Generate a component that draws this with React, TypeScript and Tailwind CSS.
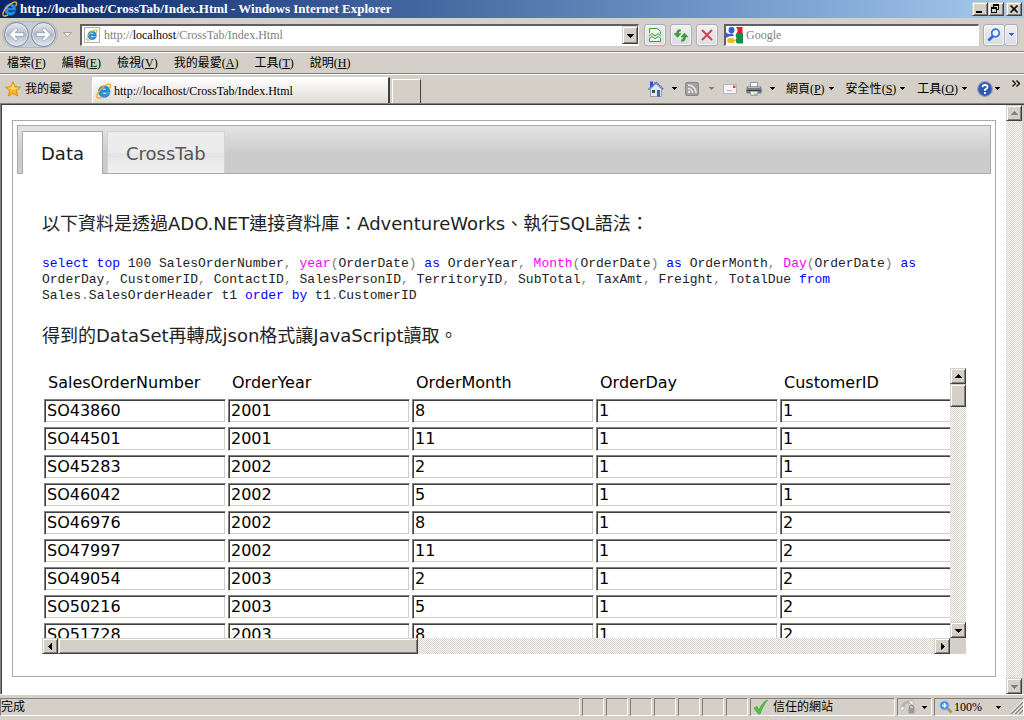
import React from "react";

const ui = "font-['Liberation_Serif','Noto_Sans_CJK_TC',serif]";
const raised =
  "border border-t-[#d4d0c8] border-l-[#d4d0c8] border-r-[#404040] border-b-[#404040] bg-[#d4d0c8] shadow-[inset_1px_1px_0_#fff,inset_-1px_-1px_0_#808080]";
const track =
  "bg-[conic-gradient(#fff_25%,#d4d0c8_0_50%,#fff_0_75%,#d4d0c8_0)] bg-[length:2px_2px]";
const glass =
  "flex items-center justify-center rounded-[3px] border border-[#a9afbd] bg-linear-to-b from-[#f3f2f1] via-[#e4e4e8] to-[#dcdde4] shadow-[inset_0_0_0_1px_#f4f4f6]";
const pane = "flex h-[18px] items-center border border-t-[#808080] border-l-[#808080] border-r-white border-b-white";

function Arrow({ dir, color = "#000", small = false }: { dir: "up" | "down" | "left" | "right"; color?: string; small?: boolean }) {
  const paths = {
    up: "M4 2h1v1h1v1h1v1h1v1H1V5h1V4h1V3h1z",
    down: "M1 3h7v1H7v1H6v1H5v1H4V6H3V5H2V4H1z",
    left: "M6 1v7H5V7H4V6H3V5H2V4h1V3h1V2h1V1z",
    right: "M3 1v7h1V7h1V6h1V5h1V4H6V3H5V2H4V1z",
  };
  const path = small ? "M2 3h5v1H6v1H5v1H4V5H3V4H2z" : paths[dir];
  return (
    <svg viewBox="0 0 9 9" className="size-[9px] shrink-0" shapeRendering="crispEdges" aria-hidden="true">
      <path d={path} fill={color} />
    </svg>
  );
}

function IeLogo({ className = "size-4" }: { className?: string }) {
  return (
    <svg viewBox="0 0 16 16" className={`${className} shrink-0`} aria-hidden="true">
      <path d="M14 9.300H6c.2 1.300 1.100 2 2.400 2 .9 0 1.500-.3 2-.9h3.400c-.9 2.500-2.900 3.900-5.500 3.900-3.400 0-5.900-2.400-5.900-5.800 0-3.300 2.500-5.700 5.900-5.700 3.600 0 5.800 2.500 5.700 6.500zM6 7.100h4.300C10.100 5.900 9.400 5.300 8.200 5.300S6.200 5.900 6 7.100z" fill="#2493e3" stroke="#0f62b4" strokeWidth=".5" />
      <path d="M13.500 5.300C15.300 2.300 14.800.4 12 1.200 7.500 2.500.8 9.600.9 13.300c.1 2.600 3.200 1.600 5.100.5" fill="none" stroke="#f2ae1c" strokeWidth="1.400" />
    </svg>
  );
}

function PageIcon() {
  return (
    <span className="grid size-4 shrink-0 place-items-center border border-[#b0b0b0] bg-white">
      <IeLogo className="size-3" />
    </span>
  );
}

function RoundNav({ flip = false }: { flip?: boolean }) {
  return (
    <button type="button" aria-label={flip ? "下一頁" : "上一頁"} className="size-[25px] rounded-full border border-[#7f8a9c] bg-linear-to-b from-[#e6e8ec] via-[#b4bbc8] to-[#dcebf8] shadow-[inset_0_0_0_1px_#dfe4ed]">
      <svg viewBox="0 0 22 22" className={flip ? "size-full rotate-180" : "size-full"} aria-hidden="true">
        <path d="M4 11l6.500-6.500 2 2L9.500 9.300h8.500v3.400H9.500l3 2.800-2 2z" fill="#fff" stroke="#8a96aa" strokeWidth=".7" />
      </svg>
    </button>
  );
}

function Star() {
  return (
    <svg viewBox="0 0 16 16" className="size-4" aria-hidden="true">
      <path d="M8 .8l2.100 4.900 5.300.5-4 3.500 1.200 5.300L8 12.200 3.400 15l1.200-5.300-4-3.500 5.300-.5z" fill="#ffb91e" stroke="#d98a1a" />
      <path d="M8 2.500l1.300 4 4 .5-3 1.500-4.500-.2-3-1.500 3.500-.3z" fill="#ffdb66" />
    </svg>
  );
}

function House() {
  return (
    <svg viewBox="0 0 16 16" className="size-4" aria-hidden="true">
      <path d="M2.500 8L8 2.800 13.500 8v7.500h-11z" fill="#e4eaf4" stroke="#8a9ab6" />
      <path d="M2 .5h3v4l-3 2z" fill="#2c50cf" />
      <path d="M.5 8.500L8 1.200l7.500 7.300" fill="none" stroke="#3c62d6" strokeWidth="1.600" strokeDasharray="1.500 .6" />
      <path d="M4 9h3v3H4z" fill="#3d4658" />
      <path d="M9 9h3v6.500H9z" fill="#2f67bb" />
    </svg>
  );
}

function Feed() {
  return (
    <svg viewBox="0 0 14 14" className="size-[14px]" aria-hidden="true">
      <rect x=".5" y=".5" width="13" height="13" rx="1.500" fill="#a2a2a2" stroke="#858585" />
      <g fill="none" stroke="#eee" strokeWidth="1.500">
        <path d="M3 3a8 8 0 0 1 8 8M3 6.500A4.500 4.500 0 0 1 7.500 11" />
      </g>
      <circle cx="4" cy="10" r="1.200" fill="#eee" />
    </svg>
  );
}

function Mail() {
  return (
    <svg viewBox="0 0 14 10" className="h-[10px] w-[14px]" aria-hidden="true">
      <path d="M.5.5h13v9H.5z" fill="#f4f4f4" stroke="#b4b2ba" />
      <path d="M10 1.500h2.500V4H10z" fill="#ea3b35" />
      <path d="M4 6.500h5" stroke="#b5b5c2" />
    </svg>
  );
}

function Printer() {
  return (
    <svg viewBox="0 0 16 16" className="size-4" aria-hidden="true">
      <path d="M4.500 1.500h7V6h-7z" fill="#fff" stroke="#8d93a0" />
      <path d="M1 5.500h14l1 5-1 2H1l-1-2z" fill="#777b82" />
      <path d="M2 6.500h12" stroke="#b5b9c0" />
      <path d="M1 9.500h14" stroke="#3e4147" />
      <path d="M4.500 10.500h7v4h-7z" fill="#fff" stroke="#9da2ab" />
      <path d="M5.500 13h2" stroke="#e0c231" />
      <path d="M8 13h3" stroke="#2a8ee0" />
    </svg>
  );
}

function GoogleMark() {
  return (
    <svg viewBox="0 0 17 17" className="size-[17px] shrink-0" aria-hidden="true">
      <path d="M0 0h17v17H0z" fill="#fff" />
      <path d="M10 0h6.500v6H11q1.500-3-1-6z" fill="#e51c23" />
      <path d="M10.500 6H17v10.500h-6q-1.500-2-1.500-3.500l1-2-1-2z" fill="#0f9246" />
      <path d="M0 5.500Q3 8 6 6l2 3Q3 8.500 0 11z" fill="#2f63c7" />
      <ellipse cx="5.500" cy="3" rx="3" ry="3.200" fill="#2f63c7" />
      <ellipse cx="5" cy="13.500" rx="3.800" ry="2.600" fill="#f7b516" />
    </svg>
  );
}

function HelpIcon() {
  return (
    <svg viewBox="0 0 16 16" className="size-4" aria-hidden="true">
      <circle cx="8" cy="8" r="7.300" fill="#2c58b8" stroke="#8d9bb5" strokeWidth="1.200" />
      <path d="M5.500 6.200Q5.500 4 8 4t2.500 2.200Q10.500 7.500 8 8.500V10" fill="none" stroke="#fff" strokeWidth="1.800" />
      <path d="M7 11h2v2H7z" fill="#fff" />
    </svg>
  );
}

function Magnifier() {
  return (
    <svg viewBox="0 0 14 14" className="size-[14px]" aria-hidden="true">
      <path d="M1.500 12.500L6 8" stroke="#2468e0" strokeWidth="2.600" />
      <circle cx="8.500" cy="5" r="3.800" fill="#eef5ff" stroke="#2f73ea" strokeWidth="1.700" />
    </svg>
  );
}

function Key({ label, k }: { label: string; k: string }) {
  return (
    <span>
      {label}(<u className="underline-offset-1">{k}</u>)
    </span>
  );
}

const menus = [
  ["檔案", "F"],
  ["編輯", "E"],
  ["檢視", "V"],
  ["我的最愛", "A"],
  ["工具", "T"],
  ["說明", "H"],
];

const columns = ["SalesOrderNumber", "OrderYear", "OrderMonth", "OrderDay", "CustomerID"];
const orders = [
  ["SO43860", "2001", "8", "1", "1"],
  ["SO44501", "2001", "11", "1", "1"],
  ["SO45283", "2002", "2", "1", "1"],
  ["SO46042", "2002", "5", "1", "1"],
  ["SO46976", "2002", "8", "1", "2"],
  ["SO47997", "2002", "11", "1", "2"],
  ["SO49054", "2003", "2", "1", "2"],
  ["SO50216", "2003", "5", "1", "2"],
  ["SO51728", "2003", "8", "1", "2"],
];

function TitleBar() {
  return (
    <header className="flex h-[18px] shrink-0 items-center bg-linear-to-r from-[#0a246a] to-[#a6caf0] px-[2px]">
      <IeLogo />
      <h1 className="ml-[2px] flex-1 truncate text-[13px] leading-[18px] font-bold text-white">http://localhost/CrossTab/Index.Html - Windows Internet Explorer</h1>
      <button type="button" aria-label="最小化" className={`h-[14px] w-4 ${raised}`}>
        <svg viewBox="0 0 14 12" className="size-full"><path d="M3 8h6v2H3z" /></svg>
      </button>
      <button type="button" aria-label="還原" className={`h-[14px] w-4 ${raised}`}>
        <svg viewBox="0 0 14 12" className="size-full" shapeRendering="crispEdges"><path d="M4 1h6v6H8v3H2V4h2zM5 3v1h3v2h1V3zM3 6v3h4V6z" fillRule="evenodd" /></svg>
      </button>
      <button type="button" aria-label="關閉" className={`ml-[2px] h-[14px] w-4 ${raised}`}>
        <svg viewBox="0 0 14 12" className="size-full"><path d="M3.500 2.500l7 7m0-7l-7 7" stroke="#000" strokeWidth="1.600" /></svg>
      </button>
    </header>
  );
}

function AddressBar() {
  return (
    <div className="flex h-[33px] shrink-0 items-center pr-[6px] pl-[2px]">
      <div className="flex h-[27px] items-center gap-[2px] rounded-full border border-[#b4b8bf] bg-[#c6cad2] px-px">
        <RoundNav />
        <RoundNav flip />
      </div>
      <button type="button" aria-label="最近的網頁" className="mx-[5px] w-[9px]">
        <svg viewBox="0 0 9 6" className="h-[6px] w-[9px]"><path d="M.5.500h8l-4 4.500z" fill="#eee" stroke="#a6a39c" /></svg>
      </button>
      <div className="ml-[3px] flex h-[22px] flex-1 items-center border-t-2 border-r border-b border-l-2 border-t-[#606060] border-r-white border-b-white border-l-[#606060] bg-white pl-[2px]">
        <PageIcon />
        <div className="relative ml-1 h-[18px] flex-1 text-[12px] leading-[18px]">
          <input aria-label="網址" className="size-full bg-transparent outline-none" />
          <span className="pointer-events-none absolute inset-0 text-[#808080]">
            http://<span className="text-black">localhost</span>/CrossTab/Index.Html
          </span>
        </div>
        <button type="button" aria-label="網址清單" className={`grid h-[18px] w-4 place-items-center ${raised}`}>
          <Arrow dir="down" />
        </button>
      </div>
      <button type="button" aria-label="相容性檢視" className={`ml-[5px] size-[22px] ${glass}`}>
        <svg viewBox="0 0 14 16" className="h-4 w-[14px]">
          <path d="M1.500 6V1.500h8l3 3V7M1.500 11v3.500h11V11" fill="#f4fff2" stroke="#3e9c3b" />
          <path d="M1 9l3-2.500L7 9l3-2.500L13 9M1 12l3-2.500L7 12l3-2.500L13 12" fill="none" stroke="#3e9c3b" />
        </svg>
      </button>
      <button type="button" aria-label="重新整理" className={`ml-1 size-[22px] ${glass}`}>
        <svg viewBox="0 0 16 16" className="size-4">
          <path d="M7.500 2.500C4.500 2.500 3.500 4 3.500 6.500H1l3.500 4 3.500-4H5.700C5.700 5 6 4.300 7.500 4.200z" fill="#35a333" stroke="#278325" strokeWidth=".4" />
          <path d="M8.500 14.500c3 0 4-1.500 4-4.500H15l-3.500-4L8 10h2.300c0 1.800-.3 2.600-1.800 2.700z" fill="#35a333" stroke="#278325" strokeWidth=".4" />
        </svg>
      </button>
      <button type="button" aria-label="停止" className={`ml-1 size-[22px] ${glass}`}>
        <svg viewBox="0 0 12 12" className="size-3"><path d="M1 1l10 10m0-10L1 11" stroke="#ca4650" strokeWidth="2" /></svg>
      </button>
      <div className="ml-[6px] flex h-[22px] w-[255px] items-center border-t-2 border-r border-b border-l-2 border-t-[#606060] border-r-white border-b-white border-l-[#606060] bg-white">
        <GoogleMark />
        <input aria-label="搜尋" placeholder="Google" className="ml-[3px] w-full bg-transparent text-[12px] text-[#808080] outline-none placeholder:text-[#808080]" />
      </div>
      <div className="ml-1 flex">
        <button type="button" aria-label="搜尋" className={`h-[22px] w-[22px] ${glass}`}><Magnifier /></button>
        <button type="button" aria-label="搜尋選項" className={`-ml-px h-[22px] w-[14px] ${glass}`}><Arrow dir="down" small color="#2468c8" /></button>
      </div>
    </div>
  );
}

function MenuBar() {
  return (
    <nav className="flex h-[22px] shrink-0 items-center gap-4 border-t border-[#808080] px-[7px] text-[12px] shadow-[inset_0_1px_0_#fff]">
      {menus.map(([label, k]) => (
        <button key={k} type="button" className="whitespace-nowrap">
          <Key label={label} k={k} />
        </button>
      ))}
    </nav>
  );
}

function CommandBar() {
  return (
    <div className="flex h-[30px] shrink-0 items-center border-t border-t-[#808080] text-[12px] shadow-[inset_0_1px_0_#fff]">
      <button type="button" className="flex w-[92px] shrink-0 items-center gap-1 pl-[5px]">
        <Star />
        我的最愛
      </button>
      <button type="button" className="flex h-[26px] w-[298px] items-center gap-[2px] self-end border-t border-r-2 border-l border-white border-r-[#404040] bg-linear-to-b from-white to-[#dedbd5] pl-[3px]">
        <IeLogo />
        http://localhost/CrossTab/Index.Html
      </button>
      <button type="button" aria-label="新索引標籤" className="ml-[2px] h-6 w-[29px] self-end border-t border-r border-l border-white border-r-[#404040]" />
      <div className="ml-auto flex items-center whitespace-nowrap">
        <button type="button" aria-label="首頁" className="flex items-center gap-[6px]"><House /><Arrow dir="down" small /></button>
        <button type="button" aria-label="摘要" className="ml-[6px] flex items-center gap-2"><Feed /><Arrow dir="down" small color="#808080" /></button>
        <button type="button" aria-label="讀取郵件" className="ml-[7px]"><Mail /></button>
        <button type="button" aria-label="列印" className="ml-[9px] flex items-center gap-[6px]"><Printer /><Arrow dir="down" small /></button>
        <button type="button" className="ml-[9px] flex items-center gap-[2px]"><Key label="網頁" k="P" /><Arrow dir="down" small /></button>
        <button type="button" className="ml-[10px] flex items-center gap-[2px]"><Key label="安全性" k="S" /><Arrow dir="down" small /></button>
        <button type="button" className="ml-[10px] flex items-center gap-[2px]"><Key label="工具" k="O" /><Arrow dir="down" small /></button>
        <button type="button" aria-label="說明" className="ml-2 flex items-center"><HelpIcon /><Arrow dir="down" small /></button>
        <button type="button" aria-label="更多" className="mr-1 ml-[10px] self-start">
          <svg viewBox="0 0 8 7" className="h-[7px] w-2"><path d="M.5.500l3 3-3 3m4-6l3 3-3 3" fill="none" stroke="#000" strokeWidth="1.300" /></svg>
        </button>
      </div>
    </div>
  );
}

function Kw({ children }: { children: React.ReactNode }) {
  return <span className="text-[#0000ff]">{children}</span>;
}

function Fn({ children }: { children: React.ReactNode }) {
  return <span className="text-[#ff00ff]">{children}</span>;
}

function P({ children }: { children: React.ReactNode }) {
  return <span className="text-[#808080]">{children}</span>;
}

function Sql() {
  const fields = ["OrderDay", "CustomerID", "ContactID", "SalesPersonID", "TerritoryID", "SubTotal", "TaxAmt", "Freight"];
  return (
    <p className="font-['Liberation_Mono',monospace] text-[13px] leading-4 text-[#222]">
      <Kw>select top</Kw> 100 SalesOrderNumber<P>,</P> <Fn>year</Fn><P>(</P>OrderDate<P>)</P> <Kw>as</Kw> OrderYear<P>,</P>{" "}
      <Fn>Month</Fn><P>(</P>OrderDate<P>)</P> <Kw>as</Kw> OrderMonth<P>,</P> <Fn>Day</Fn><P>(</P>OrderDate<P>)</P> <Kw>as</Kw>{" "}
      {fields.map((f) => (
        <React.Fragment key={f}>
          {f}
          <P>,</P>{" "}
        </React.Fragment>
      ))}
      TotalDue <Kw>from</Kw>{" "}
      <span className="whitespace-nowrap">Sales<P>.</P>SalesOrderHeader</span> t1 <Kw>order by</Kw> t1<P>.</P>CustomerID
    </p>
  );
}

function OrdersGrid() {
  return (
    <div className="grid grid-cols-[1fr_16px] grid-rows-[270px_16px]">
      <div className="overflow-hidden">
        <table className="w-[920px] table-fixed border-collapse text-[16px] text-black">
          <thead>
            <tr className="h-[29px]">
              {columns.map((c) => (
                <th key={c} scope="col" className="w-[184px] p-0 pl-[6px] text-left leading-6 font-normal">{c}</th>
              ))}
            </tr>
          </thead>
          <tbody>
            {orders.map((row) => (
              <tr key={row[0]} className="h-7">
                {row.map((value, i) => (
                  <td key={columns[i]} className="p-0 pl-[2px]">
                    <input
                      aria-label={`${columns[i]} ${row[0]}`}
                      defaultValue={value}
                      className="block h-6 w-[182px] border border-t-[#808080] border-r-white border-b-white border-l-[#808080] px-[2px] shadow-[inset_1px_1px_0_#404040,inset_-1px_-1px_0_#d4d0c8] outline-none"
                    />
                  </td>
                ))}
              </tr>
            ))}
          </tbody>
        </table>
      </div>
      <div className={`flex flex-col ${track}`}>
        <button type="button" aria-label="向上捲動" className={`grid size-4 place-items-center ${raised}`}><Arrow dir="up" /></button>
        <div className={`h-[23px] ${raised}`} />
        <button type="button" aria-label="向下捲動" className={`mt-auto grid size-4 place-items-center ${raised}`}><Arrow dir="down" /></button>
      </div>
      <div className={`flex ${track}`}>
        <button type="button" aria-label="向左捲動" className={`grid size-4 place-items-center ${raised}`}><Arrow dir="left" /></button>
        <div className={`w-[360px] ${raised}`} />
        <button type="button" aria-label="向右捲動" className={`ml-auto grid size-4 place-items-center ${raised}`}><Arrow dir="right" /></button>
      </div>
      <div className="bg-[#d4d0c8]" />
    </div>
  );
}

function Page() {
  return (
    <main className="min-w-0 flex-1 overflow-hidden bg-white px-[10px] pt-[15px] font-['DejaVu_Sans','Noto_Sans_CJK_TC',sans-serif] text-[18px] leading-7 text-[#222]">
      <section className="border border-[#aaa] p-1">
        <div role="tablist" className="flex h-[49px] items-end gap-1 border border-[#aaa] bg-linear-to-b from-[#e2e2e2] from-5% via-[#cbcbcb] via-60% to-[#cccccc] pl-1">
          <button type="button" role="tab" aria-selected="true" className="-mb-px h-[43px] border border-b-0 border-[#aaa] bg-white px-[18px] pt-[2px] text-[#212121]">Data</button>
          <button type="button" role="tab" aria-selected="false" className="h-[42px] border border-b-0 border-[#d3d3d3] bg-linear-to-b from-[#ececec] from-50% via-[#e5e5e5] via-52% to-[#f0f0f0] px-[18px] pt-[2px] text-[#555]">CrossTab</button>
        </div>
        <div className="flex flex-col gap-[18px] pt-9 pr-[25px] pb-[18px] pl-[25px]">
          <p>以下資料是透過ADO.NET連接資料庫：AdventureWorks、執行SQL語法：</p>
          <Sql />
          <p>得到的DataSet再轉成json格式讓JavaScript讀取。</p>
          <OrdersGrid />
        </div>
      </section>
    </main>
  );
}

function StatusBar() {
  return (
    <footer className="flex h-[26px] shrink-0 items-start gap-[2px] border-t border-white pt-[3px] text-[12px] leading-4">
      <div className={`flex-1 ${pane}`}>完成</div>
      {["a", "b", "c", "d", "e", "f", "g"].map((id) => (
        <div key={id} className={`w-[22px] ${pane}`} />
      ))}
      <div className={`w-[145px] gap-1 pl-[2px] ${pane}`}>
        <svg viewBox="0 0 16 16" className="size-4" aria-hidden="true">
          <path d="M1 9l3-1.500L6 11C8 6 10.500 3 14.500 1 11.500 4.500 9 9 7 15H5.500z" fill="#4fc847" stroke="#279a27" strokeWidth=".6" />
        </svg>
        信任的網站
      </div>
      <button type="button" aria-label="受保護模式" className={`w-[35px] gap-1 pl-[2px] ${pane}`}>
        <svg viewBox="0 0 16 16" className="size-4" aria-hidden="true">
          <path d="M3 11a6 6 0 0 1 9-7" fill="none" stroke="#b5b5b5" strokeWidth="3" />
          <path d="M8 2h5v5z" fill="#f4f4f4" stroke="#a8a8a8" strokeWidth=".6" />
          <path d="M0 8h5l-2.500 4z" fill="#fff" stroke="#aaa" strokeWidth=".6" />
          <path d="M9.500 9V7.500q2-2.500 4 0V9" fill="none" stroke="#8a8a8a" strokeWidth="1.200" />
          <path d="M8.500 9h6v5.500h-6z" fill="#999" />
        </svg>
        <Arrow dir="down" small />
      </button>
      <button type="button" className={`w-[90px] pl-1 ${pane}`}>
        <svg viewBox="0 0 14 14" className="size-[14px]" aria-hidden="true">
          <path d="M8 8l4.500 4.500" stroke="#b98c54" strokeWidth="2.500" />
          <circle cx="5.500" cy="5.500" r="4.500" fill="#3b8fe8" stroke="#8dbbe8" />
          <path d="M3 5.500h5M5.500 3v5" stroke="#fff" strokeWidth="1.500" />
        </svg>
        <span className="ml-px">100%</span>
        <span className="ml-3 flex"><Arrow dir="down" small /></span>
        <svg viewBox="0 0 12 14" className="ml-auto h-[14px] w-3" aria-hidden="true">
          <path d="M0 14L12 2M4 14l8-8M8 14l4-4" stroke="#808080" strokeWidth="1.500" />
          <path d="M-1.500 14L12 .5M2.500 14L12 4.500M6.500 14L12 8.500" stroke="#fff" />
        </svg>
      </button>
    </footer>
  );
}

export default function App() {
  return (
    <div className={`flex h-screen flex-col overflow-hidden bg-[#d4d0c8] text-black ${ui}`}>
      <TitleBar />
      <AddressBar />
      <MenuBar />
      <CommandBar />
      <div className="flex min-h-0 flex-1 border-t border-l border-[#808080]">
        <div className="flex min-w-0 flex-1 border-t border-l border-[#404040]">
          <Page />
          <div className={`mr-[2px] flex w-4 shrink-0 flex-col justify-between ${track}`}>
            <button type="button" aria-label="頁面向上" className={`grid size-4 place-items-center ${raised}`}><Arrow dir="up" color="#808080" /></button>
            <button type="button" aria-label="頁面向下" className={`grid size-4 place-items-center ${raised}`}><Arrow dir="down" color="#808080" /></button>
          </div>
        </div>
      </div>
      <StatusBar />
    </div>
  );
}
